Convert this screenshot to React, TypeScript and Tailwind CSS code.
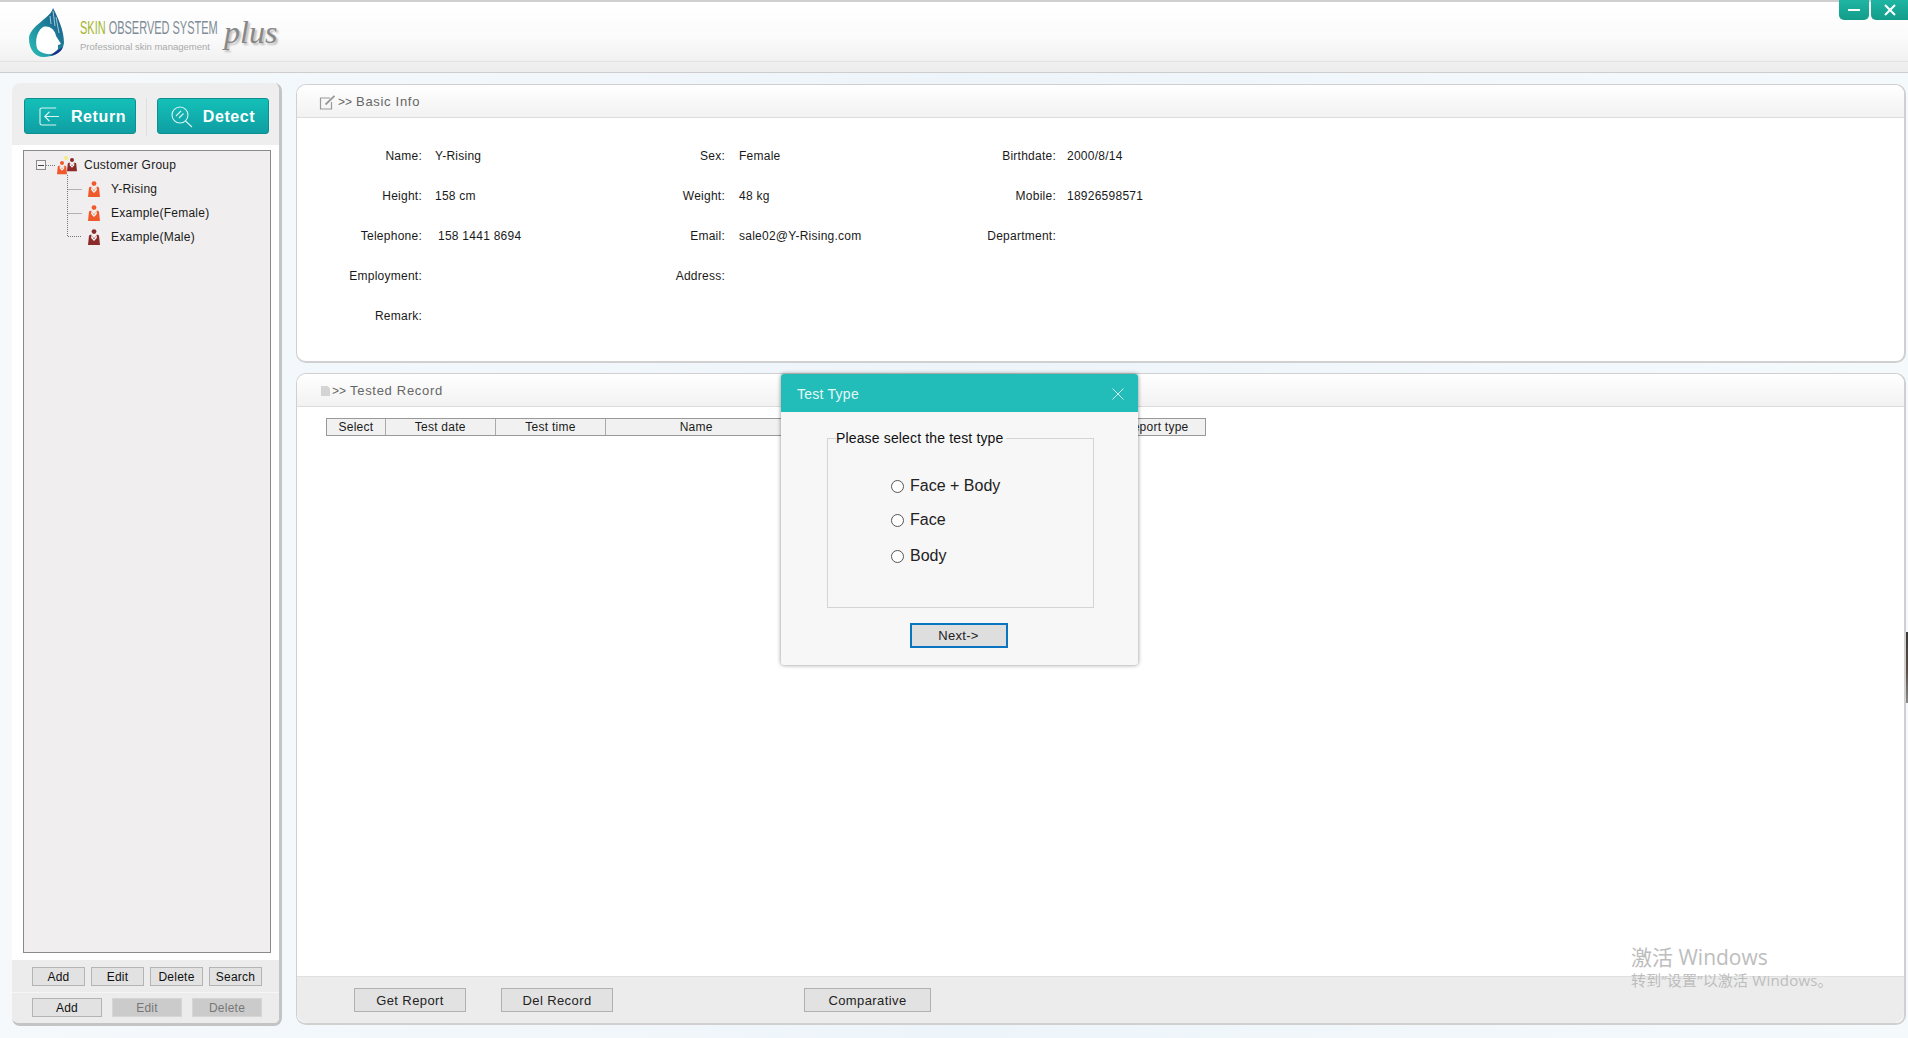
import React from 'react';

const sans = 'font-["Liberation_Sans",Arial,sans-serif]';

const Person: React.FC<{ color: string; className?: string }> = ({ color, className = 'w-[12px] h-[16px]' }) => (
  <svg viewBox="0 0 12 16" className={className}>
    <circle cx="6" cy="2.6" r="2.4" fill={color} />
    <path d="M1 6.5 L3 5.6 L6 9.5 L9 5.6 L11 6.5 L12 16 L0 16 Z" fill={color} />
    <path d="M3.4 6 L6 10.4 L8.6 6 L8.8 9 L6 12 L3.2 9 Z" fill="#fff" />
  </svg>
);

const Logo: React.FC = () => (
  <svg viewBox="0 0 37 52" className="w-[37px] h-[52px]">
    <defs>
      <linearGradient id="drop" x1="0" y1="1" x2="1" y2="0">
        <stop offset="0" stopColor="#2bc0b8" />
        <stop offset="0.55" stopColor="#1e7f9a" />
        <stop offset="1" stopColor="#1c4f86" />
      </linearGradient>
    </defs>
    <path d="M25 2 C23 12 1 20 1 33 C1 44 8 51 15 51 C26 51 35 46 36 37 C36 24 30 12 25 2 Z" fill="url(#drop)" />
    <path d="M15 21 C22 19 27 24 28 30 L33 38 L30 39 L30 43 L27 46 C22 50 15 48 10 44 C7 40 7 26 15 21 Z" fill="#fff" />
    <path d="M27 46 L35 41 C33 46 28 49 22 50 Z" fill="#1d2f8a" />
    <path d="M25 5 L27 20 M28 11 L31 27 M22 10 L23 18" stroke="#bfe6ea" strokeWidth="0.8" fill="none" />
  </svg>
);

const TreeRow: React.FC<{ label: string; color: string }> = ({ label, color }) => (
  <div className="flex items-center h-[24px] pl-[64px] gap-[11px]">
    <Person color={color} />
    <span>{label}</span>
  </div>
);

const SmallButton: React.FC<{ label: string; width: string; disabled?: boolean }> = ({ label, width, disabled }) => (
  <button
    className={`${width} h-[19px] border text-[12px] leading-none ${
      disabled ? 'bg-[#cbcbcb] border-[#d6d6d6] text-[#777]' : 'bg-[#e2e2e2] border-[#b4b4b4] text-[#111]'
    }`}
  >
    {label}
  </button>
);

const FooterButton: React.FC<{ label: string; width: string }> = ({ label, width }) => (
  <button className={`${width} h-[24px] bg-[#e2e2e2] border border-[#b0b0b0] text-[13px] leading-none tracking-[0.4px] text-[#222]`}>
    {label}
  </button>
);

const PanelTitle: React.FC<{ title: string; icon: React.ReactNode }> = ({ title, icon }) => (
  <div className="flex items-center h-[33px] pt-[2px] pl-[22px] bg-gradient-to-b from-white to-[#f2f2f2] border-b border-[#dcdcdc] rounded-t-[9px] text-[13px] tracking-[0.7px] text-[#666]">
    {icon}
    <span className="ml-[2px] mr-[4px] text-[12px] tracking-normal">&gt;&gt;</span>
    <span>{title}</span>
  </div>
);

const fields: [string, string][] = [
  ['Name:', 'Y-Rising'],
  ['Sex:', 'Female'],
  ['Birthdate:', '2000/8/14'],
  ['Height:', '158 cm'],
  ['Weight:', '48 kg'],
  ['Mobile:', '18926598571'],
  ['Telephone:', '158 1441 8694'],
  ['Email:', 'sale02@Y-Rising.com'],
  ['Department:', ''],
  ['Employment:', ''],
  ['Address:', ''],
  ['', ''],
  ['Remark:', ''],
  ['', ''],
  ['', ''],
];

const columns: [string, string][] = [
  ['Select', 'w-[59px]'],
  ['Test date', 'w-[110px]'],
  ['Test time', 'w-[111px]'],
  ['Name', 'w-[181px]'],
  ['', 'w-[321px]'],
  ['Report type', 'w-[98px]'],
];

const valuePad = (i: number) => {
  if (i === 6) return 'pl-[16px]';
  if (i % 3 === 0) return 'pl-[13px]';
  return i % 3 === 1 ? 'pl-[14px]' : 'pl-[11px]';
};

const App: React.FC = () => {
  return (
    <div className={`relative h-[1038px] overflow-hidden bg-gradient-to-r from-[#f5f9fc] via-[#eef5fa] to-[#f4f9fc] ${sans} text-[12px] tracking-[0.25px] text-[#1a1a1a]`}>
      <header className="h-[73px] border-t-2 border-[#cfcfcf] border-b border-b-[#cdcdcd] bg-gradient-to-b from-white via-[#fbfbfb] to-[#ececec]">
        <div className="flex items-center justify-between h-[60px] border-b border-[#e2e2e2]">
          <div className="flex items-center pl-[28px]">
            <Logo />
            <div className="ml-[15px] w-[145px] pt-[8px]">
              <div className="text-[18px] leading-[20px] tracking-normal origin-left scale-x-[0.61] whitespace-nowrap text-[#7f8c96]">
                <span className="text-[#a3b62a]">SKIN</span> OBSERVED SYSTEM
              </div>
              <div className="mt-[3px] text-[9.5px] leading-[12px] tracking-normal text-[#aaa] whitespace-nowrap">Professional skin management</div>
            </div>
            <span className='-ml-[1px] font-["Liberation_Serif",serif] italic text-[32px] leading-none tracking-normal text-[#888] [text-shadow:2px_2px_2px_#bbb]'>plus</span>
          </div>
          <div className="flex self-start gap-[2px] -mt-[2px]">
            <div className="flex items-center justify-center w-[30px] h-[20px] rounded-b-[5px] bg-gradient-to-b from-[#1fb5a3] to-[#139c8a]">
              <div className="w-[12px] h-[2px] bg-white" />
            </div>
            <div className="flex items-center justify-center w-[37px] h-[20px] rounded-bl-[5px] bg-gradient-to-b from-[#1fb5a3] to-[#139c8a]">
              <svg viewBox="0 0 12 12" className="w-[12px] h-[12px]">
                <path d="M1 1 L11 11 M11 1 L1 11" stroke="#fff" strokeWidth="2" />
              </svg>
            </div>
          </div>
        </div>
      </header>

      <main className="flex pl-[12px] pt-[10px] gap-[14px]">
        <aside className="flex flex-col w-[270px] h-[943px] rounded-[8px] bg-white border-r-[3px] border-b-[3px] border-[#c4c4c4] overflow-hidden">
          <div className="flex items-start h-[62px] pl-[12px] pt-[15px] bg-[#eeeeee]">
            <button className="flex items-center justify-center w-[112px] h-[36px] pl-[5px] pt-px rounded-[3px] border border-[#0e8f8f] bg-gradient-to-b from-[#14c0b8] to-[#0f9ea3] text-white text-[16px] font-bold tracking-[0.6px]">
              <svg viewBox="0 0 22 20" className="w-[21px] h-[19px] mr-[11px]" fill="none" stroke="#d8f5f3" strokeWidth="1.2">
                <path d="M18 1 H3 Q1 1 1 3 V17 Q1 19 3 19 H18" />
                <path d="M21 10 H6 M11 5 L6 10 L11 15" />
              </svg>
              Return
            </button>
            <div className="w-px h-[38px] mx-[10px] bg-[#dedede]" />
            <button className="flex items-center justify-center w-[112px] h-[36px] pt-px rounded-[3px] border border-[#0e8f8f] bg-gradient-to-b from-[#14c0b8] to-[#0f9ea3] text-white text-[16px] font-bold tracking-[0.6px]">
              <svg viewBox="0 0 22 22" className="w-[22px] h-[22px] mr-[10px]" fill="none" stroke="#d8f5f3" strokeWidth="1.1">
                <circle cx="9" cy="9" r="8" />
                <path d="M14.5 15 L21 21 M5 10 L10 5 M8 12 L12.5 7.5" />
              </svg>
              Detect
            </button>
          </div>

          <div className="flex-1 ml-[11px] mr-[8px] mt-[5px] bg-[#f0eeee] border border-[#8a8a8a] relative">
            <svg className="absolute left-0 top-0 w-[70px] h-[100px]" fill="none" stroke="#777" strokeDasharray="1 1">
              <path d="M22 14.5 H32 M43.5 24 V85.5 H58 M43.5 38.5 H58 M43.5 62.5 H58" />
            </svg>
            <div className="relative pt-[4px] text-[12px]">
              <div className="flex items-center h-[20px] pl-[12px]">
                <div className="flex items-center justify-center w-[10px] h-[10px] border border-[#8a8a8a] bg-[#f4f4f4]">
                  <div className="w-[6px] h-px bg-[#444]" />
                </div>
                <div className="relative flex ml-[11px] w-[21px] h-[19px] items-end">
                  <Person color="#f0592b" className="w-[10px] h-[15px]" />
                  <Person color="#8a2a2a" className="w-[10px] h-[15px] -mt-[3px] mb-[3px]" />
                  <div className="absolute left-[7px] top-0 w-[4px] h-[4px] rounded-full bg-[#f5ea80]" />
                </div>
                <span className="ml-[6px]">Customer Group</span>
              </div>
              <div className="mt-[2px]">
                <TreeRow label="Y-Rising" color="#f0592b" />
                <TreeRow label="Example(Female)" color="#f0592b" />
                <TreeRow label="Example(Male)" color="#8a2a2a" />
              </div>
            </div>
          </div>

          <div className="mt-[7px] h-[63px] bg-[#ececec]">
            <div className="flex gap-[6px] pl-[20px] pt-[7px] pb-[6px] border-b border-[#f6f6f6]">
              <SmallButton label="Add" width="w-[53px]" />
              <SmallButton label="Edit" width="w-[53px]" />
              <SmallButton label="Delete" width="w-[53px]" />
              <SmallButton label="Search" width="w-[53px]" />
            </div>
            <div className="flex gap-[10px] pl-[20px] pt-[5px]">
              <SmallButton label="Add" width="w-[70px]" />
              <SmallButton label="Edit" width="w-[70px]" disabled />
              <SmallButton label="Delete" width="w-[70px]" disabled />
            </div>
          </div>
        </aside>

        <div className="flex flex-col w-[1610px] mt-px gap-[10px]">
          <section className="h-[279px] bg-white rounded-[10px] border border-[#d0d0d0] border-r-2 border-b-2">
            <PanelTitle
              title="Basic Info"
              icon={
                <svg viewBox="0 0 17 15" className="w-[17px] h-[15px]" fill="none" stroke="#999" strokeWidth="1.2">
                  <path d="M11 3 H1.5 V14 H12.5 V7" />
                  <path d="M6.5 9.5 L15.5 0.8" strokeWidth="1.8" />
                </svg>
              }
            />
            <div className="grid grid-cols-[125px_198px_105px_225px_106px_1fr] auto-rows-[40px] items-center pt-[18px]">
              {fields.map(([label, value], i) => (
                <React.Fragment key={i}>
                  <div className="text-right">{label}</div>
                  <div className={valuePad(i)}>{value}</div>
                </React.Fragment>
              ))}
            </div>
          </section>

          <section className="flex flex-col h-[652px] bg-white rounded-[10px] border border-[#d0d0d0] border-r-2 border-b-2">
            <PanelTitle
              title="Tested Record"
              icon={
                <svg viewBox="0 0 9 10" className="w-[9px] h-[10px] ml-[2px]">
                  <path d="M0 0 H6.5 L9 2.5 V10 H0 Z" fill="#d4d4d4" />
                </svg>
              }
            />
            <div className="flex-1 pl-[29px] pt-[11px]">
              <div className="flex h-[18px] w-[880px] border border-[#999] bg-[#f1f1f1]">
                {columns.map(([label, width], i) => (
                  <div key={i} className={`${width} flex items-center justify-center border-[#aaa] ${i < 5 ? 'border-r' : ''} text-[12px] leading-none`}>
                    {label}
                  </div>
                ))}
              </div>
            </div>
            <div className="flex items-center h-[47px] pl-[57px] bg-[#ececec] border-t border-[#e0e0e0] rounded-b-[10px]">
              <FooterButton label="Get Report" width="w-[112px]" />
              <div className="w-[35px]" />
              <FooterButton label="Del Record" width="w-[112px]" />
              <div className="w-[191px]" />
              <FooterButton label="Comparative" width="w-[127px]" />
            </div>
          </section>
        </div>
      </main>

      {/* dialog */}
      <div className="absolute left-[781px] top-[374px] w-[357px] h-[291px] rounded-[3px] bg-[#f7f7f7] shadow-[0_0_4px_rgba(0,0,0,0.45)]">
        <div className="flex items-center justify-between h-[38px] pl-[16px] pr-[14px] pt-[2px] rounded-t-[3px] bg-[#22bcb9] text-[14px] text-[#e6f7f6]">
          <span>Test Type</span>
          <svg viewBox="0 0 12 12" className="w-[12px] h-[12px]">
            <path d="M0.5 0.5 L11.5 11.5 M11.5 0.5 L0.5 11.5" stroke="#e6f7f6" strokeWidth="0.9" />
          </svg>
        </div>
        <fieldset className="ml-[46px] w-[267px] mt-[16px] h-[180px] border border-[#d4d4d4] pl-[8px]">
          <legend className="px-0 pr-[3px] text-[14px] leading-[20px] tracking-[0.15px] text-[#111]">Please select the test type</legend>
          <div className="flex flex-col pl-[55px] pt-[26px] text-[16px] tracking-normal text-[#222]">
            {['Face + Body', 'Face', 'Body'].map((label, i) => (
              <label key={label} className={`flex items-center h-[24px] gap-[6px] ${i === 1 ? 'mt-[10px]' : i === 2 ? 'mt-[12px]' : ''}`}>
                <span className="w-[13px] h-[13px] rounded-full border border-[#555] bg-white" />
                {label}
              </label>
            ))}
          </div>
        </fieldset>
        <div className="flex justify-center mt-[15px] pr-[2px]">
          <button className="w-[98px] h-[25px] border-2 border-[#0a73c2] bg-[#dedede] text-[13px] leading-none tracking-[0.3px] text-[#222]">Next-&gt;</button>
        </div>
      </div>

      {/* activation watermark */}
      <div className='absolute left-[1631px] top-[944px] font-["Open_Sans","Noto_Sans_CJK_SC",sans-serif] tracking-normal text-[#bdbdbd]'>
        <div className="text-[21px] leading-[26px]">激活 Windows</div>
        <div className="text-[15px] leading-[20px] tracking-[0.2px]">转到“设置”以激活 Windows。</div>
      </div>

      {/* sliver of a window behind */}
      <div className="absolute right-0 top-[632px] w-[2px] h-[71px] bg-gradient-to-b from-[#3a3a3a] via-[#5a4a40] to-[#8a8a8a]" />
    </div>
  );
};

export default App;
